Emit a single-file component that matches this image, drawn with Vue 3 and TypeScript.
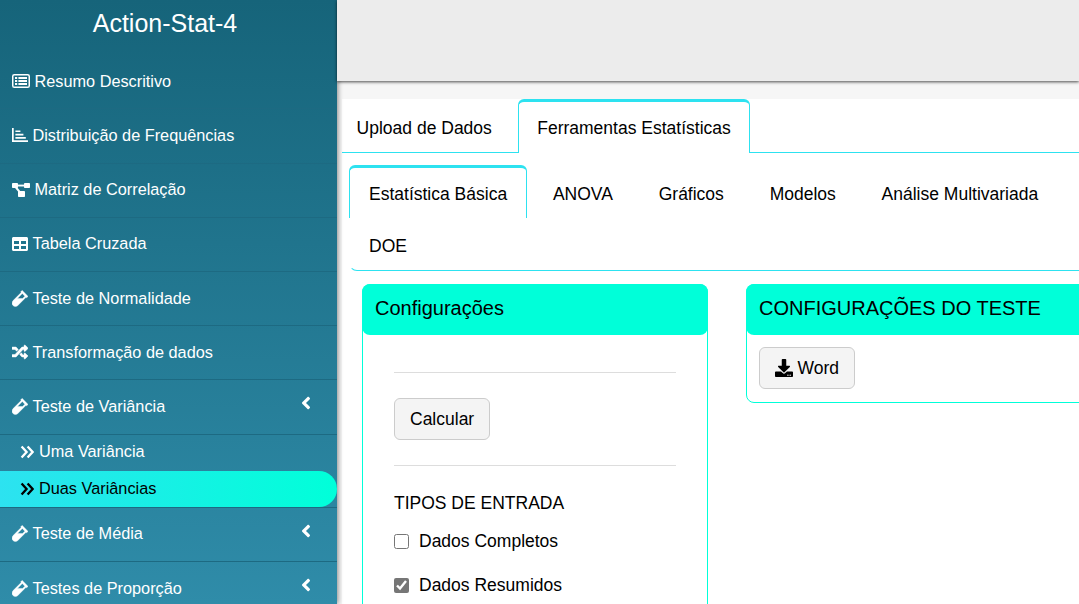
<script setup lang="ts">
interface MenuItem {
  label: string
  icon: string
  children?: string[]
  chevron?: boolean
}

const VIAL = 'M477.7 186.1L309.5 18.3c-3.1-3.1-8.2-3.1-11.3 0l-34 33.9c-3.1 3.1-3.1 8.2 0 11.3l11.2 11.1L33 316.5c-38.8 38.7-45.1 102-9.4 143.5 20.6 24 49.5 36 78.4 35.9 26.4 0 52.8-10 72.9-30.1l246.3-245.7 11.2 11.1c3.1 3.1 8.2 3.1 11.3 0l34-33.9c3.1-3 3.1-8.1-.1-11.2zM318 256H161l148-147.7 78.5 78.3L318 256z'
const TABLE = 'M464 32H48C21.49 32 0 53.49 0 80v352c0 26.51 21.49 48 48 48h416c26.51 0 48-21.49 48-48V80c0-26.51-21.49-48-48-48zM224 416H64v-96h160v96zm0-160H64v-96h160v96zm224 160H288v-96h160v96zm0-160H288v-96h160v96z'
const RANDOM = 'M504.971 359.029c9.373 9.373 9.373 24.569 0 33.941l-80 79.984c-15.01 15.01-40.971 4.49-40.971-16.971V416h-58.785a12.004 12.004 0 0 1-8.773-3.812l-70.556-75.596 53.333-57.143L352 352h32v-39.981c0-21.438 25.943-31.998 40.971-16.971l80 79.981zM12 176h84l52.781 56.551 53.333-57.143-70.556-75.596A11.999 11.999 0 0 0 122.785 96H12c-6.627 0-12 5.373-12 12v56c0 6.627 5.373 12 12 12zm372 0v39.984c0 21.46 25.961 31.98 40.971 16.971l80-79.984c9.373-9.373 9.373-24.569 0-33.941l-80-79.981C409.943 24.021 384 34.582 384 56.019V96h-58.785a12.004 12.004 0 0 0-8.773 3.812L96 336H12c-6.627 0-12 5.373-12 12v56c0 6.627 5.373 12 12 12h110.785c3.326 0 6.503-1.381 8.773-3.812L352 176h32z'
const ANGLE_LEFT = 'M31.7 239l136-136c9.4-9.4 24.6-9.4 33.9 0l22.6 22.6c9.4 9.4 9.4 24.6 0 33.9L127.9 256l96.4 96.4c9.4 9.4 9.4 24.6 0 33.9L201.7 409c-9.4 9.4-24.6 9.4-33.9 0l-136-136c-9.5-9.4-9.5-24.6-.1-34z'
const DOWNLOAD = 'M216 0h80c13.3 0 24 10.7 24 24v168h87.7c17.8 0 26.7 21.5 14.1 34.1L269.7 378.3c-7.5 7.5-19.8 7.5-27.3 0L90.1 226.1c-12.6-12.6-3.7-34.1 14.1-34.1H192V24c0-13.3 10.7-24 24-24zm296 376v112c0 13.3-10.7 24-24 24H24c-13.3 0-24-10.7-24-24V376c0-13.3 10.7-24 24-24h146.7l49 49c20.1 20.1 52.5 20.1 72.6 0l49-49H488c13.3 0 24 10.7 24 24zm-124 88c0-11-9-20-20-20s-20 9-20 20 9 20 20 20 20-9 20-20zm64 0c0-11-9-20-20-20s-20 9-20 20 9 20 20 20 20-9 20-20z'

const menu: MenuItem[] = [
  { label: 'Resumo Descritivo', icon: 'list' },
  { label: 'Distribuição de Frequências', icon: 'bars' },
  { label: 'Matriz de Correlação', icon: 'diagram' },
  { label: 'Tabela Cruzada', icon: 'table' },
  { label: 'Teste de Normalidade', icon: 'vial' },
  { label: 'Transformação de dados', icon: 'random' },
  { label: 'Teste de Variância', icon: 'vial', chevron: true, children: ['Uma Variância', 'Duas Variâncias'] },
  { label: 'Teste de Média', icon: 'vial', chevron: true },
  { label: 'Testes de Proporção', icon: 'vial', chevron: true }
]

const subTabs = ['ANOVA', 'Gráficos', 'Modelos', 'Análise Multivariada', 'DOE']
</script>

<template>
  <div class="page">
    <aside class="sidebar">
      <div class="brand">Action-Stat-4</div>
      <ul class="menu">
        <li v-for="item in menu" :key="item.label" class="menu-item">
          <div class="menu-link">
            <svg v-if="item.icon === 'list'" class="ic ic-list" viewBox="0 0 18 14">
              <rect x="0.75" y="0.75" width="16.5" height="12.5" rx="1.6" fill="none" stroke="currentColor" stroke-width="1.5" />
              <path d="M3 3h2.2v1.9H3zM3 6.1h2.2V8H3zM3 9.1h2.2V11H3zM6.4 3H15v1.9H6.4zM6.4 6.1H15V8H6.4zM6.4 9.1H15V11H6.4z" fill="currentColor" />
            </svg>
            <svg v-else-if="item.icon === 'bars'" class="ic" viewBox="0 0 16 14">
              <path d="M0 0h1.7v12.3H16V14H0zM3.4 2.5h5v1.6h-5zM3.4 5.8h8v1.6h-8zM3.4 9.1h10.4v1.6H3.4z" fill="currentColor" />
            </svg>
            <svg v-else-if="item.icon === 'diagram'" class="ic ic-list" viewBox="0 0 18 14">
              <rect x="0" y="0" width="6" height="5" rx="0.8" fill="currentColor" />
              <rect x="12" y="0" width="6" height="5" rx="0.8" fill="currentColor" />
              <rect x="6" y="8" width="7" height="6" rx="0.8" fill="currentColor" />
              <path d="M5 1.6h8v1.9H5z" fill="currentColor" />
              <path d="M3.6 4l4.4 5.4" stroke="currentColor" stroke-width="2" fill="none" />
            </svg>
            <svg v-else-if="item.icon === 'table'" class="ic" viewBox="0 32 512 448">
              <path :d="TABLE" fill="currentColor" />
            </svg>
            <svg v-else-if="item.icon === 'vial'" class="ic ic-vial" viewBox="0 0 480 512">
              <path :d="VIAL" fill="currentColor" stroke="currentColor" stroke-width="12" />
            </svg>
            <svg v-else class="ic ic-random" viewBox="0 0 512 512">
              <path :d="RANDOM" fill="currentColor" stroke="currentColor" stroke-width="14" />
            </svg>
            <span class="menu-text">{{ item.label }}</span>
            <svg v-if="item.chevron" class="chevron" viewBox="0 0 256 512">
              <path :d="ANGLE_LEFT" fill="currentColor" />
            </svg>
          </div>
          <ul v-if="item.children" class="submenu">
            <li
              v-for="(child, i) in item.children"
              :key="child"
              class="submenu-item"
              :class="{ active: i === 1 }"
            >
              <svg class="ic-double" viewBox="0 0 14 14">
                <path d="M1.6 1.5L6.6 7l-5 5.5M7.6 1.5l5 5.5-5 5.5" fill="none" stroke="currentColor" stroke-width="2.3" />
              </svg>
              <span>{{ child }}</span>
            </li>
          </ul>
        </li>
      </ul>
    </aside>

    <main class="main">
      <header class="topbar"></header>
      <div class="body">
        <div class="panel">
          <nav class="tabs">
            <div class="tab tab-first">Upload de Dados</div>
            <div class="tab tab-active">Ferramentas Estatísticas</div>
          </nav>

          <nav class="subtabs">
            <div class="subtab subtab-active">Estatística Básica</div>
            <div v-for="tab in subTabs" :key="tab" class="subtab">{{ tab }}</div>
          </nav>

          <div class="cards">
            <section class="card card-config">
              <h3 class="card-head">Configurações</h3>
              <div class="card-body config-body">
                <hr class="rule" />
                <button class="btn" type="button">Calcular</button>
                <hr class="rule rule-two" />
                <div class="field-title">TIPOS DE ENTRADA</div>
                <label class="check">
                  <input type="checkbox" />
                  <span>Dados Completos</span>
                </label>
                <label class="check">
                  <input type="checkbox" checked />
                  <span>Dados Resumidos</span>
                </label>
              </div>
            </section>

            <section class="card card-test">
              <h3 class="card-head">CONFIGURAÇÕES DO TESTE</h3>
              <div class="card-body">
                <button class="btn btn-word" type="button">
                  <svg class="ic-download" viewBox="0 0 512 512">
                    <path :d="DOWNLOAD" fill="currentColor" />
                  </svg>
                  <span>Word</span>
                </button>
              </div>
            </section>
          </div>
        </div>
      </div>
    </main>
  </div>
</template>

<style>
html,
body {
  margin: 0;
  overflow: hidden;
}
</style>

<style scoped>
.page {
  display: flex;
  width: 1079px;
  height: 604px;
  overflow: hidden;
  font-family: 'Liberation Sans', Arial, sans-serif;
  color: #000;
  background: #fff;
}

.sidebar {
  flex: 0 0 337px;
  height: 604px;
  overflow: hidden;
  position: relative;
  z-index: 3;
  color: #fff;
  background: linear-gradient(180deg, #16647a 0%, #2f8ca9 100%);
  box-shadow: 1px 0 5px rgba(0, 0, 0, 0.45);
}

.brand {
  height: 49px;
  line-height: 47px;
  text-align: center;
  font-size: 25px;
  margin-left: -7px;
}

.menu,
.submenu {
  list-style: none;
  margin: 0;
  padding: 0;
}

.menu {
  margin-top: 5.2px;
}

.menu-link {
  display: flex;
  align-items: center;
  height: 54.2px;
  box-sizing: border-box;
  padding-left: 12px;
  font-size: 16.3px;
  position: relative;
}

.menu-item + .menu-item .menu-link {
  border-top: 1px solid #1d6a82;
  padding-bottom: 1px;
}

.menu-item:last-child .menu-link {
  margin-top: 0.4px;
  padding-bottom: 0;
}

.menu-text {
  margin-left: 4.5px;
}

.ic {
  width: 16px;
  height: 14px;
  flex: none;
}

.ic-list {
  width: 18px;
}

.ic-vial {
  width: 16px;
  height: 17px;
}

.ic-random {
  width: 16px;
  height: 16px;
}

.chevron {
  position: absolute;
  left: 301px;
  top: 13px;
  width: 10px;
  height: 20px;
}

.submenu-item {
  display: flex;
  align-items: center;
  height: 37px;
  box-sizing: border-box;
  padding: 0 0 2px 19.5px;
  font-size: 16.3px;
  border-top: 1px solid #1d6a82;
}

.submenu-item span {
  margin-left: 5.5px;
}

.submenu-item.active {
  height: 36px;
  padding-bottom: 0;
  border-top: 0;
  color: #000;
  border-radius: 0 18px 18px 0;
  background: linear-gradient(90deg, #2de2f0 0%, #00ffd9 100%);
}

.ic-double {
  width: 14px;
  height: 14px;
  flex: none;
}

.main {
  flex: 1;
  min-width: 0;
  background: #f6f6f6;
}

.topbar {
  height: 81px;
  background: #ececec;
  box-shadow: 0 1px 3px rgba(0, 0, 0, 0.7);
  position: relative;
  z-index: 4;
}

.body {
  padding: 18px 0 0 5px;
}

.panel {
  background: #fff;
  height: 505px;
  overflow: hidden;
}

.tabs {
  display: flex;
  height: 54px;
  box-sizing: border-box;
  border-bottom: 1px solid #2de2f0;
  font-size: 17.5px;
}

.tab {
  line-height: 58px;
  height: 53px;
}

.tab-first {
  padding: 0 26.4px 0 14.6px;
}

.tab-active {
  box-sizing: border-box;
  padding: 0 18px;
  height: 54px;
  line-height: 53px;
  background: #fff;
  border: 1px solid #2de2f0;
  border-top: 3px solid #2de2f0;
  border-bottom: 0;
  border-radius: 6px 6px 0 0;
}

.subtabs {
  display: flex;
  flex-wrap: wrap;
  margin: 12px 0 0 7px;
  font-size: 17.5px;
  border: 1px solid #2de2f0;
  border-width: 0 0 1px 1px;
  border-left-color: transparent;
  border-radius: 0 0 0 8px;
}

.subtab {
  height: 52px;
  line-height: 59px;
  padding: 0 20px;
  margin-left: 5.8px;
}

.subtab-active {
  box-sizing: border-box;
  height: 53px;
  padding: 0 19px;
  line-height: 53px;
  margin-left: -1px;
  border: 1px solid #2de2f0;
  border-top: 3px solid #2de2f0;
  border-bottom: 0;
  border-radius: 6px 6px 0 0;
}

.subtab:last-child {
  margin-left: -1px;
  line-height: 56px;
}

.cards {
  display: flex;
  align-items: flex-start;
  gap: 38px;
  margin: 13px 0 0 20px;
}

.card {
  flex: none;
  box-sizing: border-box;
  border: 1px solid #00ffd9;
  border-radius: 8px;
}

.card-config {
  width: 346px;
  height: 400px;
}

.card-test {
  width: 600px;
}

.card-head {
  margin: -1px -1px 0;
  height: 51px;
  line-height: 49px;
  padding-left: 13px;
  font-size: 20px;
  font-weight: 400;
  background: #00ffd9;
  border-radius: 8px;
}

.card-body {
  padding: 12px 12px 13px;
}

.config-body {
  padding: 37px 31px 0;
}

.rule {
  margin: 0 0 25px;
  border: 0;
  border-top: 1px solid #ddd;
}

.rule-two {
  margin: 25px 0 25px;
}

.btn {
  display: inline-flex;
  align-items: center;
  height: 42px;
  box-sizing: border-box;
  padding: 0 15px;
  font: inherit;
  font-size: 17.5px;
  color: #000;
  background: #f4f4f4;
  border: 1px solid #ccc;
  border-radius: 6px;
}

.btn-word {
  gap: 4.6px;
}

.ic-download {
  width: 18px;
  height: 18px;
}

.field-title {
  font-size: 17.5px;
  line-height: 24px;
}

.check {
  display: flex;
  align-items: center;
  gap: 10px;
  height: 22px;
  margin-top: 15px;
  font-size: 17.5px;
}

.check + .check {
  margin-top: 22px;
}

.check input {
  width: 15px;
  height: 15px;
  margin: 0;
  accent-color: #767676;
}
</style>
